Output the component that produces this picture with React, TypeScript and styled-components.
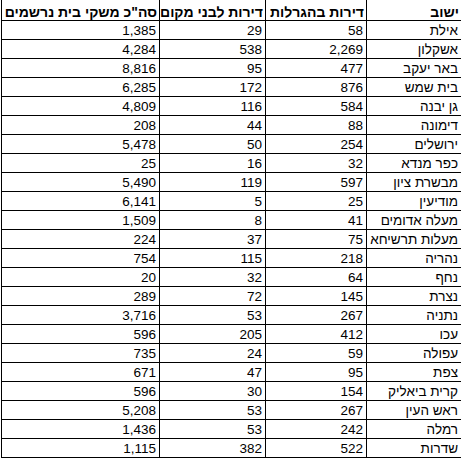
import React from "react";
import styled, { createGlobalStyle } from "styled-components";

// --- GLOBAL -------------------------------------------------------------------------
const GlobalStyle = createGlobalStyle`
	html, body {
		margin: 0;
		padding: 0;
		background: #ffffff;
	}
	body {
		font-family: "Liberation Sans", Arial, "DejaVu Sans", sans-serif;
		color: #000000;
	}
`;

// --- SHEET --------------------------------------------------------------------------
const Page = styled.div`
	width: 461px;
	padding-left: 1px;
	box-sizing: border-box;
`;

const Sheet = styled.div`
	direction: rtl;
	display: grid;
	grid-template-columns: 95px 101px 106px 158px;
	grid-auto-rows: 19px;
	grid-template-rows: 21px;
`;

const Cell = styled.div<{ header?: boolean }>`
	box-sizing: border-box;
	border-left: 1px solid #000;
	border-bottom: 1px solid #000;
	padding: ${(props) => (props.header ? "4px 2px" : "2px 3px")} 0 0;
	text-align: right;
	white-space: nowrap;
	overflow: hidden;
	line-height: 16px;
	font-size: ${(props) => (props.header ? "14px" : "13.5px")};
	font-weight: ${(props) => (props.header ? 700 : 400)};
`;

const headers = ["ישוב", "דירות בהגרלות", "דירות לבני מקום", 'סה"כ משקי בית נרשמים'];

const rows: [string, string, string, string][] = [
	["אילת", "58", "29", "1,385"],
	["אשקלון", "2,269", "538", "4,284"],
	["באר יעקב", "477", "95", "8,816"],
	["בית שמש", "876", "172", "6,285"],
	["גן יבנה", "584", "116", "4,809"],
	["דימונה", "88", "44", "208"],
	["ירושלים", "254", "50", "5,478"],
	["כפר מנדא", "32", "16", "25"],
	["מבשרת ציון", "597", "119", "5,490"],
	["מודיעין", "25", "5", "6,141"],
	["מעלה אדומים", "41", "8", "1,509"],
	["מעלות תרשיחא", "75", "37", "224"],
	["נהריה", "218", "115", "754"],
	["נחף", "64", "32", "20"],
	["נצרת", "145", "72", "289"],
	["נתניה", "267", "53", "3,716"],
	["עכו", "412", "205", "596"],
	["עפולה", "59", "24", "735"],
	["צפת", "95", "47", "671"],
	["קרית ביאליק", "154", "30", "596"],
	["ראש העין", "267", "53", "5,208"],
	["רמלה", "242", "53", "1,436"],
	["שדרות", "522", "382", "1,115"],
];

export default function App() {
	return (
		<>
			<GlobalStyle />
			<Page>
				<Sheet>
					{headers.map((h) => (
						<Cell header key={h}>
							{h}
						</Cell>
					))}
					{rows.map((row) =>
						row.map((value, i) => <Cell key={row[0] + i}>{value}</Cell>)
					)}
				</Sheet>
			</Page>
		</>
	);
}
